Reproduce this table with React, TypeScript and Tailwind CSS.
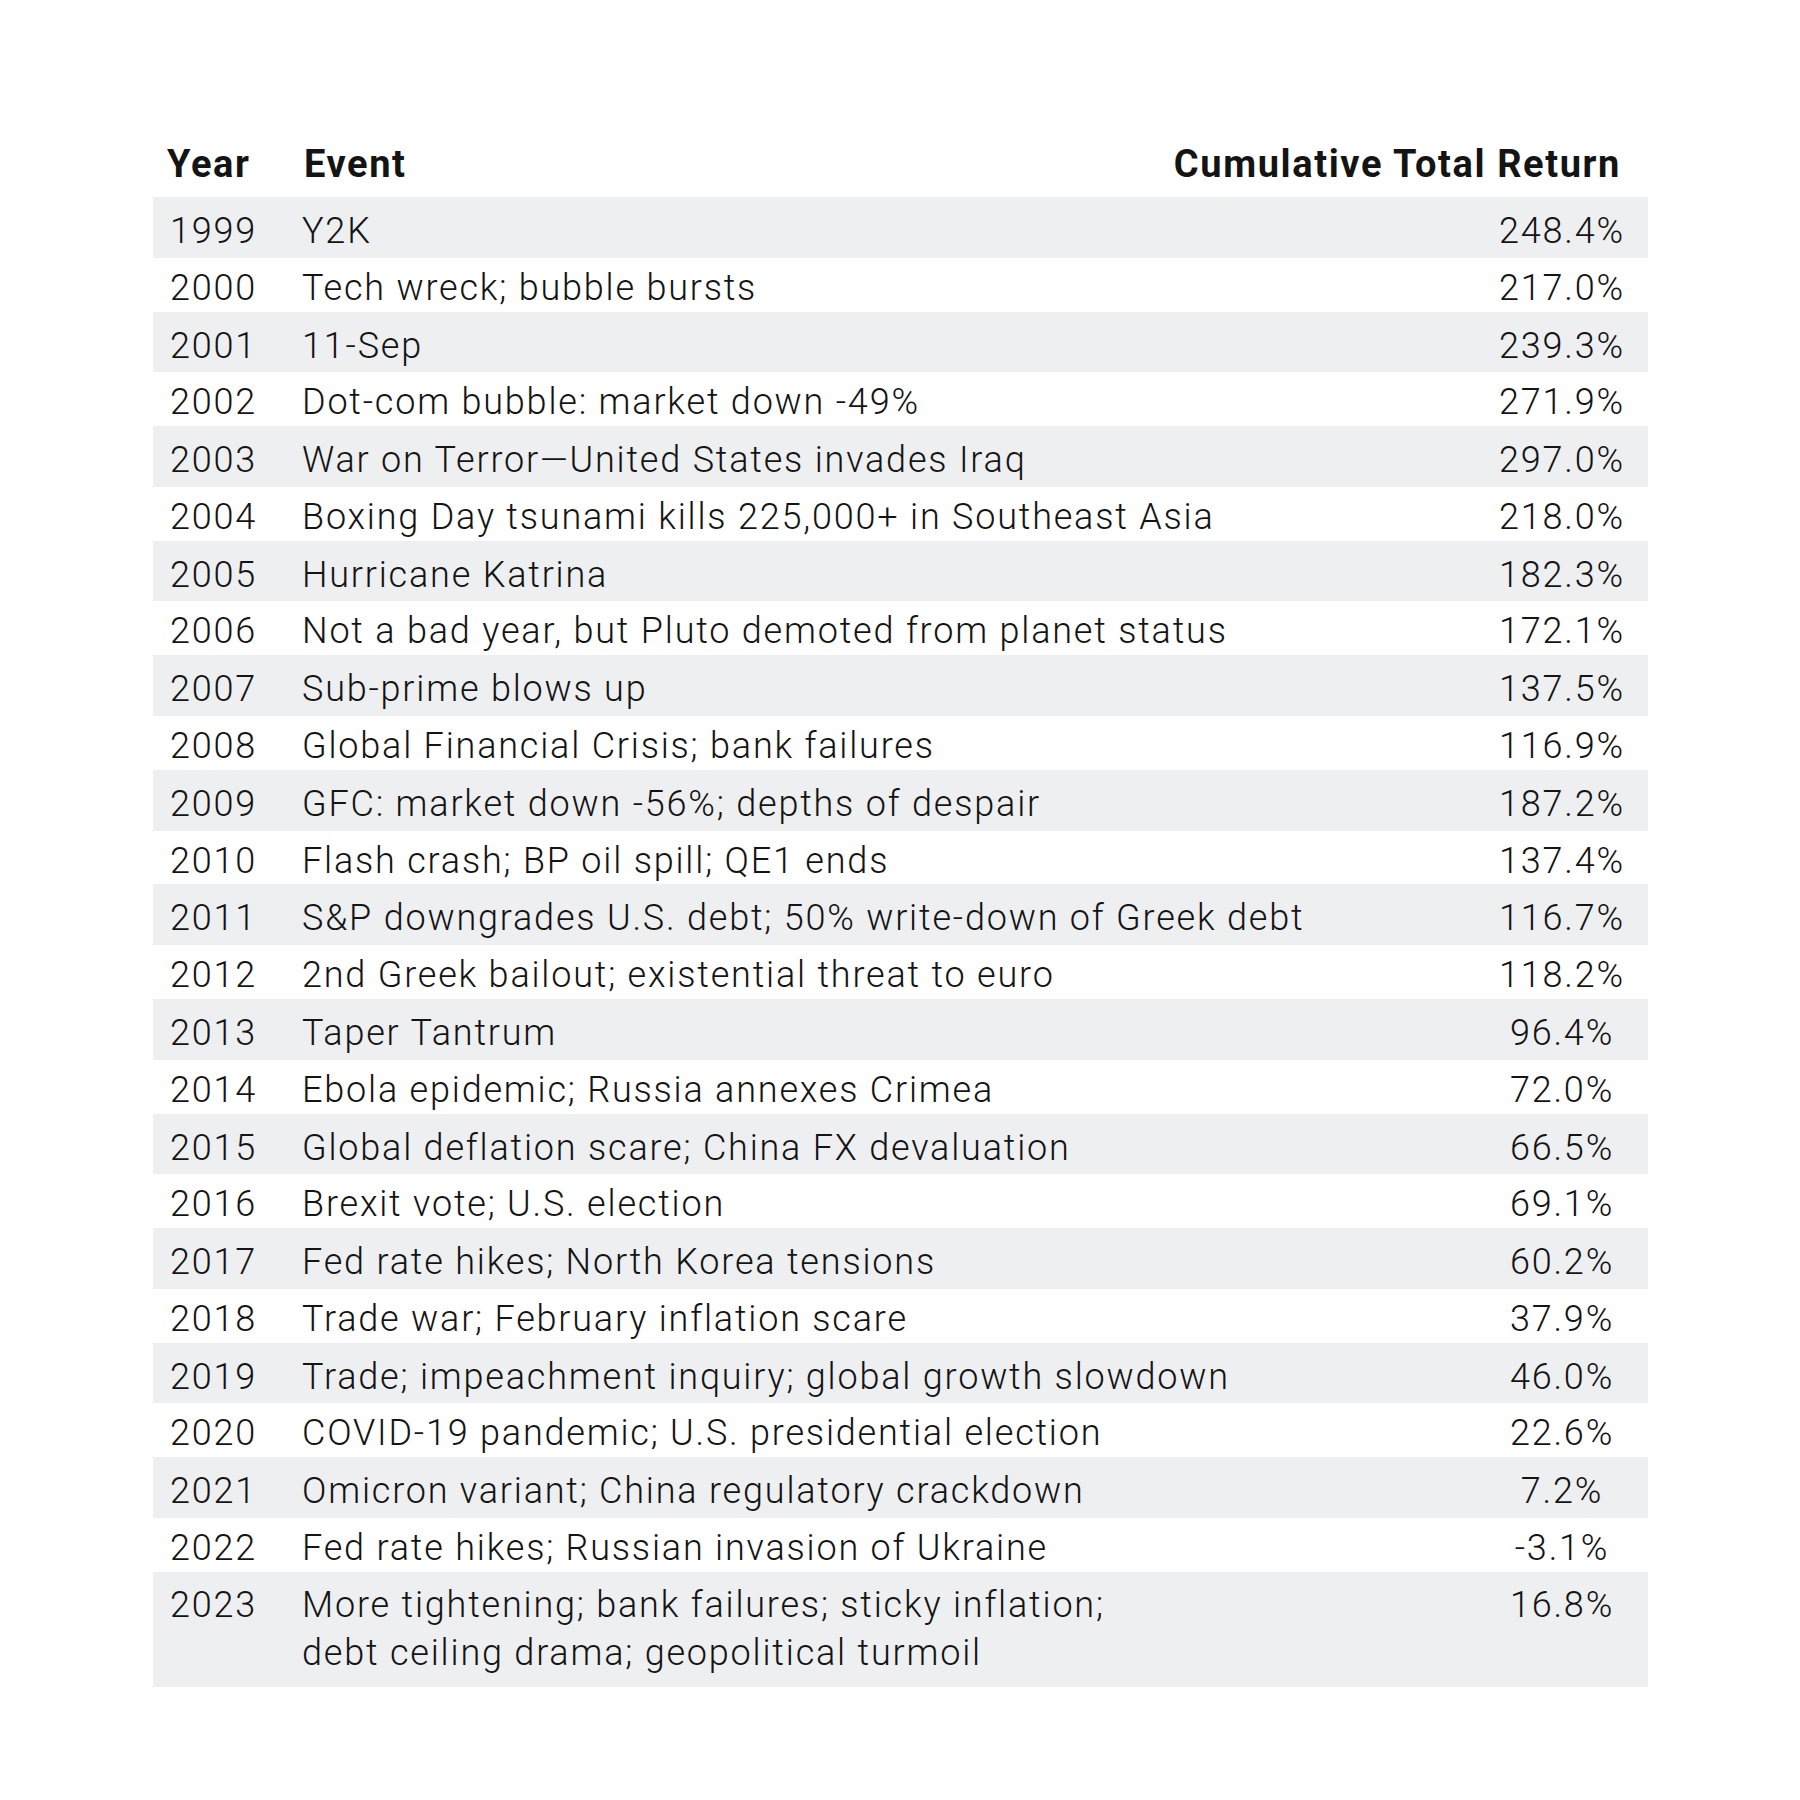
const rows: [string, string, string][] = [
  ['1999', 'Y2K', '248.4%'],
  ['2000', 'Tech wreck; bubble bursts', '217.0%'],
  ['2001', '11-Sep', '239.3%'],
  ['2002', 'Dot-com bubble: market down -49%', '271.9%'],
  ['2003', 'War on Terror\u2014United States invades Iraq', '297.0%'],
  ['2004', 'Boxing Day tsunami kills 225,000+ in Southeast Asia', '218.0%'],
  ['2005', 'Hurricane Katrina', '182.3%'],
  ['2006', 'Not a bad year, but Pluto demoted from planet status', '172.1%'],
  ['2007', 'Sub-prime blows up', '137.5%'],
  ['2008', 'Global Financial Crisis; bank failures', '116.9%'],
  ['2009', 'GFC: market down -56%; depths of despair', '187.2%'],
  ['2010', 'Flash crash; BP oil spill; QE1 ends', '137.4%'],
  ['2011', 'S&P downgrades U.S. debt; 50% write-down of Greek debt', '116.7%'],
  ['2012', '2nd Greek bailout; existential threat to euro', '118.2%'],
  ['2013', 'Taper Tantrum', '96.4%'],
  ['2014', 'Ebola epidemic; Russia annexes Crimea', '72.0%'],
  ['2015', 'Global deflation scare; China FX devaluation', '66.5%'],
  ['2016', 'Brexit vote; U.S. election', '69.1%'],
  ['2017', 'Fed rate hikes; North Korea tensions', '60.2%'],
  ['2018', 'Trade war; February inflation scare', '37.9%'],
  ['2019', 'Trade; impeachment inquiry; global growth slowdown', '46.0%'],
  ['2020', 'COVID-19 pandemic; U.S. presidential election', '22.6%'],
  ['2021', 'Omicron variant; China regulatory crackdown', '7.2%'],
  ['2022', 'Fed rate hikes; Russian invasion of Ukraine', '-3.1%'],
];

export default function App() {
  return (
    <div className="w-[1800px] h-[1800px] bg-white text-[#141414] font-['Roboto',sans-serif]">
      <div className="pt-[135px] pl-[153px] w-[1648px]">
        <div className="flex items-center h-[62px] pb-[5px] text-[38px] font-bold tracking-[1.6px] leading-none">
          <div className="w-[151px] pl-[14px]">Year</div>
          <div className="flex-1">Event</div>
          <div className="pr-[27px]">Cumulative Total Return</div>
        </div>

        <div className="text-[36px] font-light tracking-[1.8px] leading-[48px]">
          {rows.map(([year, event, ret], i) => (
            <div
              key={year}
              className={
                i % 2 === 0
                  ? 'flex h-[60.7px] pt-[10px] bg-[#eeeff1]'
                  : 'flex h-[53.9px] pt-[6px] bg-white'
              }
            >
              <div className="w-[149px] pl-[17px]">{year}</div>
              <div className="flex-1">{event}</div>
              <div className="w-[172px] text-center">{ret}</div>
            </div>
          ))}
          <div className="flex h-[115px] pt-[9px] bg-[#eeeff1]">
            <div className="w-[149px] pl-[17px]">2023</div>
            <div className="flex-1">
              More tightening; bank failures; sticky inflation;
              <br />
              debt ceiling drama; geopolitical turmoil
            </div>
            <div className="w-[172px] text-center">16.8%</div>
          </div>
        </div>
      </div>
    </div>
  );
}
